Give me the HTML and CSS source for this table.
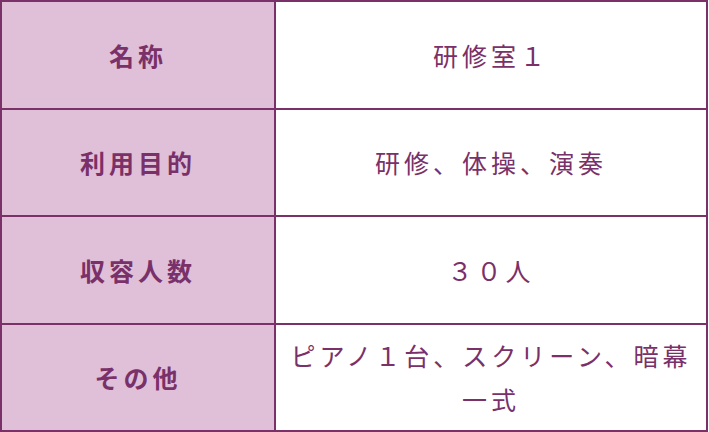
FILE: index.html
```html
<!DOCTYPE html>
<html lang="ja">
<head>
<meta charset="utf-8">
<link rel="stylesheet" href="styles.css">
</head>
<body>
<table class="info">
  <tbody>
    <tr class="row">
      <th class="label">名称</th>
      <td class="value">研修室１</td>
    </tr>
    <tr class="row">
      <th class="label">利用目的</th>
      <td class="value">研修、体操、演奏</td>
    </tr>
    <tr class="row">
      <th class="label">収容人数</th>
      <td class="value">３０人</td>
    </tr>
    <tr class="row">
      <th class="label">その他</th>
      <td class="value">ピアノ１台、スクリーン、暗幕一式</td>
    </tr>
  </tbody>
</table>
</body>
</html>
```

FILE: styles.css
```css
html, body {
  margin: 0;
  padding: 0;
  background: #ffffff;
}

.info {
  border-collapse: collapse;
  width: 708px;
  font-family: "Noto Sans CJK JP", "Noto Sans", sans-serif;
  font-size: 25px;
  line-height: 44px;
  letter-spacing: 4px;
  color: #7a3068;
}

.row {
  height: 107.5px;
}

.info th,
.info td {
  border: 2px solid #7a3068;
  text-align: center;
  vertical-align: middle;
  padding: 0 8px;
}

.label {
  width: 256px;
  background: #dfc0d8;
  font-weight: 700;
}

.value {
  background: #ffffff;
  font-weight: 400;
}
```
